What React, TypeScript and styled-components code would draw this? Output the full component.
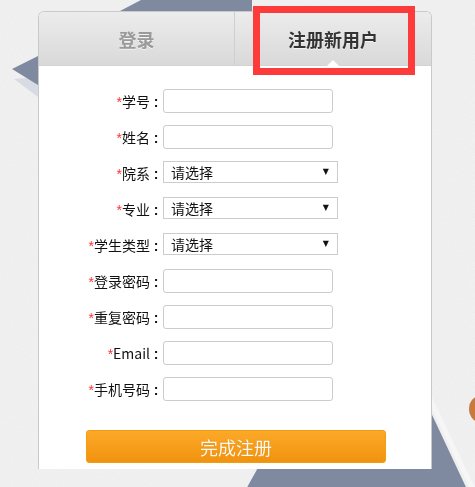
import React from "react";
import styled, { createGlobalStyle } from "styled-components";

const Global = createGlobalStyle`
  html, body { margin: 0; padding: 0; }
  body {
    background: #efefef;
    font-family: "Noto Sans CJK SC", "Noto Sans", sans-serif;
    width: 475px;
    height: 487px;
    overflow: hidden;
  }
`;

const Backdrop = styled.svg`
  position: fixed;
  left: 0;
  top: 0;
  width: 475px;
  height: 487px;
  z-index: 0;
`;

const Page = styled.div`
  position: relative;
  z-index: 1;
  padding: 11px 0 0 38px;
`;

const Panel = styled.div`
  box-sizing: border-box;
  width: 394px;
  height: 458px;
  background: #fff;
  border: 1px solid #c9c9c9;
  border-bottom: none;
  border-radius: 6px 6px 0 0;
  overflow: hidden;
  display: flex;
  flex-direction: column;
`;

const TabBar = styled.div`
  display: grid;
  grid-template-columns: 196px 1fr;
  height: 53px;
  border-bottom: 1px solid #d2d2d2;
  background: linear-gradient(#ececec, #d9d9d9);
`;

const Tab = styled.div<{ $active?: boolean }>`
  position: relative;
  display: flex;
  align-items: center;
  justify-content: center;
  font-size: 18px;
  font-weight: bold;
  color: ${(p) => (p.$active ? "#333" : "#9a9a9a")};
  text-shadow: 0 1px 0 rgba(255, 255, 255, 0.6);
  border-right: ${(p) => (p.$active ? "none" : "1px solid #cfcfcf")};

  ${(p) =>
    p.$active &&
    `
    &::after {
      content: "";
      position: absolute;
      left: 50%;
      bottom: -1px;
      margin-left: -6px;
      border-left: 6px solid transparent;
      border-right: 6px solid transparent;
      border-bottom: 6px solid #fff;
    }
  `}
`;

const Highlight = styled.div`
  position: absolute;
  left: 253px;
  top: 6px;
  width: 162px;
  height: 69px;
  box-sizing: border-box;
  border: 7px solid #fd3b3b;
  pointer-events: none;
`;

const Form = styled.form`
  display: flex;
  flex-direction: column;
  padding-top: 23px;
`;

const Row = styled.div`
  display: flex;
  align-items: flex-start;
  height: 24px;
  margin-bottom: 12px;
`;

const Label = styled.label`
  box-sizing: border-box;
  width: 124px;
  padding-right: 1px;
  text-align: right;
  font-size: 14px;
  line-height: 24px;
  color: #111;
  white-space: nowrap;
`;

const Star = styled.span`
  color: #f33;
  font-family: "Liberation Sans", sans-serif;
  font-size: 14px;
`;

const Colon = styled.span`
  display: inline-block;
  width: 12px;
  text-align: center;
  font-family: "Liberation Sans", sans-serif;
  font-weight: bold;
  font-size: 14px;
`;

const TextInput = styled.input`
  box-sizing: border-box;
  width: 170px;
  height: 24px;
  border: 1px solid #cccccc;
  border-radius: 3px;
  padding: 0 6px;
  font-size: 14px;
  outline: none;
  background: #fff;
`;

const SelectBox = styled.div`
  box-sizing: border-box;
  width: 175px;
  height: 22px;
  border: 1px solid #cccccc;
  display: flex;
  align-items: center;
  padding: 0 8px 0 0;
  background: #fff;
`;

const Select = styled.select`
  flex: 1;
  appearance: none;
  -webkit-appearance: none;
  border: none;
  outline: none;
  background: transparent;
  font-family: "Noto Sans CJK SC", sans-serif;
  font-size: 14px;
  color: #111;
  padding: 0 0 0 7px;
  height: 20px;
  line-height: 20px;
`;

const Arrow = styled.span`
  font-family: "DejaVu Sans", sans-serif;
  font-size: 8px;
  color: #111;
  line-height: 1;
`;

const SubmitButton = styled.button`
  box-sizing: border-box;
  align-self: flex-start;
  margin: 17px 0 0 47px;
  width: 300px;
  height: 33px;
  border: 1px solid #f39c12;
  border-radius: 3px;
  background: linear-gradient(#fca928, #f0930f);
  color: #fff8ec;
  font-family: "Noto Sans CJK SC", sans-serif;
  font-size: 18px;
  text-shadow: 0 0 1px rgba(160, 90, 0, 0.4);
  cursor: pointer;
`;

type Field = { label: string; kind: "text" | "select" };

const fields: Field[] = [
  { label: "学号", kind: "text" },
  { label: "姓名", kind: "text" },
  { label: "院系", kind: "select" },
  { label: "专业", kind: "select" },
  { label: "学生类型", kind: "select" },
  { label: "登录密码", kind: "text" },
  { label: "重复密码", kind: "text" },
  { label: "Email", kind: "text" },
  { label: "手机号码", kind: "text" },
];

export default function App() {
  return (
    <>
      <Global />
      <Backdrop viewBox="0 0 475 487">
        <defs>
          <filter id="noise">
            <feTurbulence type="fractalNoise" baseFrequency="0.9" numOctaves="2" seed="3" />
            <feColorMatrix
              type="matrix"
              values="0 0 0 0 1  0 0 0 0 1  0 0 0 0 1  0 0 0 0.35 0"
            />
          </filter>
        </defs>
        <rect x="0" y="0" width="475" height="487" fill="#ececec" />
        <rect x="0" y="0" width="475" height="487" filter="url(#noise)" />
        <polygon points="120,11 141,0 252,0 252,11" fill="#7f8aa0" />
        <polygon points="14,79 38,77 38,97" fill="#d7dbe3" />
        <polygon points="38,56 12,69 38,85" fill="#7f8aa0" />
        <polygon points="366,274 472,500 240,500" fill="#7f8aa0" />
        <line x1="371" y1="274" x2="478" y2="500" stroke="#f6f6f6" strokeWidth="5" />
        <ellipse cx="482" cy="409" rx="13" ry="14" fill="#c57a42" />
      </Backdrop>
      <Page>
        <Panel>
          <TabBar>
            <Tab>登录</Tab>
            <Tab $active>注册新用户</Tab>
          </TabBar>
          <Form onSubmit={(e) => e.preventDefault()}>
            {fields.map((f) => (
              <Row key={f.label}>
                <Label>
                  <Star>*</Star>
                  {f.label}
                  <Colon>:</Colon>
                </Label>
                {f.kind === "text" ? (
                  <TextInput type="text" />
                ) : (
                  <SelectBox>
                    <Select defaultValue="">
                      <option value="">请选择</option>
                    </Select>
                    <Arrow>▼</Arrow>
                  </SelectBox>
                )}
              </Row>
            ))}
            <SubmitButton type="submit">完成注册</SubmitButton>
          </Form>
        </Panel>
        <Highlight />
      </Page>
    </>
  );
}
